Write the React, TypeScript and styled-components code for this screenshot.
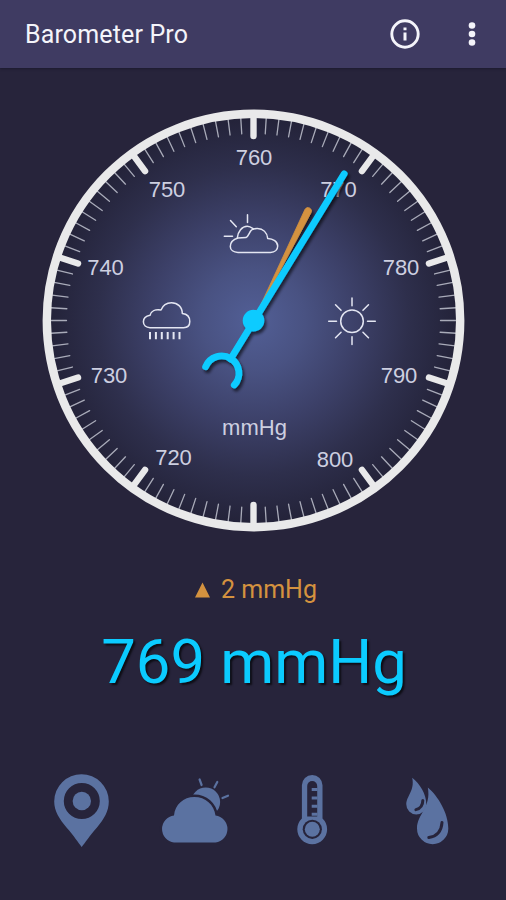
import React from "react";
import styled, { createGlobalStyle } from "styled-components";

const GlobalStyle = createGlobalStyle`
  * { box-sizing: border-box; }
  body { margin: 0; background: #27243b; }
`;

const Screen = styled.div`
  width: 506px;
  height: 900px;
  display: flex;
  flex-direction: column;
  align-items: center;
  background: #27243b;
  font-family: Roboto, "Liberation Sans", sans-serif;
  overflow: hidden;
`;

const AppBar = styled.header`
  width: 100%;
  height: 68px;
  flex: none;
  display: flex;
  align-items: center;
  justify-content: space-between;
  padding: 0 19px 0 25px;
  background: #3f3b62;
  box-shadow: 0 1px 2px rgba(20, 18, 36, 0.5);
`;

const Title = styled.h1`
  margin: 0;
  padding-top: 2px;
  font-size: 25px;
  line-height: 32px;
  font-weight: 400;
  letter-spacing: 0.15px;
  color: #f4f4fa;
`;

const Actions = styled.div`
  display: flex;
  align-items: center;
  gap: 36px;
`;

const IconButton = styled.button<{ $width: number }>`
  width: ${(p) => p.$width}px;
  height: 32px;
  padding: 0;
  border: 0;
  background: none;
  display: flex;
  align-items: center;
  justify-content: center;
`;

const Dial = styled.svg`
  display: block;
  width: 506px;
  height: 492px;
  flex: none;
`;

const DialText = styled.text`
  font-family: "Liberation Sans", Arial, sans-serif;
  font-size: 22px;
  fill: #cdcfe0;
  text-anchor: middle;
`;

const Trend = styled.div`
  display: flex;
  align-items: center;
  gap: 11px;
  height: 32px;
  margin-top: 14px;
  margin-left: 6px;
  font-size: 25px;
  line-height: 32px;
  color: #d4923f;
`;

const Reading = styled.div`
  height: 76px;
  margin-top: 18px;
  margin-left: 2px;
  font-size: 61.6px;
  line-height: 76px;
  color: #0bcbff;
  text-shadow: 2px 2px 2px rgba(0, 0, 0, 0.65);
`;

const Tabs = styled.nav`
  display: grid;
  grid-template-columns: repeat(4, 115.5px);
  margin-top: 70px;
  margin-left: 3px;
`;

const TabIcon = styled.svg`
  display: block;
  width: 115.5px;
  height: 80px;
  fill: #5b72a1;
`;

const CX = 253.5;
const CY = 320.5;

const LABELS: [string, number, number][] = [
  ["760", 254, 165],
  ["750", 167, 197],
  ["770", 338.5, 197],
  ["740", 105.5, 275],
  ["780", 401, 275],
  ["730", 109, 382.5],
  ["790", 399, 382.5],
  ["720", 173.5, 465],
  ["800", 335, 467],
];

const RAYS = [0, 45, 90, 135, 180, 225, 270, 315];

function Ticks() {
  return (
    <g strokeLinecap="round">
      {Array.from({ length: 100 }, (_, i) => {
        const major = i % 10 === 0;
        return (
          <line
            key={i}
            x1={CX}
            x2={CX}
            y1={CY - 203}
            y2={CY - (major ? 184.5 : 187)}
            stroke={major ? "#e9e9ea" : "#a9abb9"}
            strokeWidth={major ? 6.4 : 1.3}
            transform={`rotate(${i * 3.6} ${CX} ${CY})`}
          />
        );
      })}
    </g>
  );
}

function Gauge() {
  return (
    <Dial viewBox="0 68 506 492">
      <defs>
        <radialGradient id="face">
          <stop offset="0" stopColor="#525f96" />
          <stop offset="0.25" stopColor="#495282" />
          <stop offset="0.5" stopColor="#3c4068" />
          <stop offset="0.75" stopColor="#2e2f4c" />
          <stop offset="1" stopColor="#232238" />
        </radialGradient>
        <filter id="drop" x="-20%" y="-20%" width="140%" height="140%">
          <feDropShadow dx="2" dy="3" stdDeviation="1.8" floodColor="#000" floodOpacity="0.6" />
        </filter>
      </defs>
      <circle cx={CX} cy={CY} r="206.5" fill="url(#face)" />
      <Ticks />
      <circle cx={CX} cy={CY} r="206.7" fill="none" stroke="#e9e9ea" strokeWidth="8.4" />
      {LABELS.map(([label, x, y]) => (
        <DialText key={label} x={x} y={y}>
          {label}
        </DialText>
      ))}
      <DialText x="254.5" y="434.5">
        mmHg
      </DialText>
      <g fill="none" stroke="#e4e6f2" strokeWidth="1.5" strokeLinecap="round" strokeLinejoin="round">
        <path d="M238 252.4H270.5C275 252.4 277.7 249.6 277.7 246C277.7 241.5 273 238.6 267.7 238.4C267 232.5 263 228.6 257.5 228.5C255 228.4 253 229 251.5 230C249 232.5 248.5 236.5 246 237.6L238 238C233 239.5 230.3 242.5 230.3 246.5C230.3 250 233.5 252.4 238 252.4Z" />
        <path d="M237.3 238C237.8 231.5 242 226.3 247.3 226.3C250 226.3 251.7 227.7 253.5 229" />
        <path d="M247.5 214.8V222.5M230.5 220.5L236.3 226.8M224.3 236.3H232.5" />
        <path d="M150 327.7H183.5C187.5 327.7 189.8 325.3 189.8 321.5C189.8 317 187 314 182.3 313.5C182.3 307 177.5 302.7 171.5 302.7C166.5 302.7 162.7 305.5 161 310C155.5 309 151 311 150 315.3C146 316 143.4 318.5 143.4 321.8C143.4 325.3 146 327.7 150 327.7Z" />
        <path
          strokeLinecap="butt"
          strokeWidth="2"
          d="M150 332V339.3M155.9 332V339.3M161.8 332V339.3M167.7 332V339.3M173.6 332V339.3M179.5 332V339.3"
        />
        <circle cx="352" cy="321.3" r="11.3" />
        {RAYS.map((a) => (
          <path key={a} d="M352 298V305.8" transform={`rotate(${a} 352 321.3)`} />
        ))}
      </g>
      <path
        d="M253.5 320.5L304.9 209.5A3.4 3.4 0 0 1 311.1 212.5Z"
        fill="#d4923f"
        stroke="#d4923f"
        strokeWidth="0.8"
        filter="url(#drop)"
      />
      <g filter="url(#drop)" fill="none" stroke="#0bcbff" strokeWidth="6.8" strokeLinecap="round">
        <path d="M344.2 173.8L230.6 359" />
        <path d="M205.6 366.7A17.3 17.3 0 1 1 234.3 385" />
        <circle cx="253.5" cy="320.6" r="10.8" fill="#0bcbff" stroke="none" />
      </g>
    </Dial>
  );
}

function PlaceIcon() {
  return (
    <TabIcon viewBox="23.5 770 115.5 80">
      <path
        fillRule="evenodd"
        d="M81.2 847C78 843 73.5 836 66 827.5C59 819 53.7 811 53.7 801.5A27.3 27.3 0 0 1 108.3 801.5C108.3 811 103.5 819 96.5 827.5C89 836 84.5 843 81.2 847ZM81.3 783A18 18 0 1 0 81.3 819A18 18 0 1 0 81.3 783Z"
      />
      <circle cx="81.3" cy="801" r="9.2" />
    </TabIcon>
  );
}

function WeatherIcon() {
  const cloud =
    "M174 842.6A13.6 13.6 0 0 1 174 815.6C175 804.5 183.5 797 194.3 797C205.5 797 214 804.5 215.5 815.6A13.6 13.6 0 0 1 215.5 842.6Z";
  return (
    <TabIcon viewBox="139 770 115.5 80">
      <circle cx="205.7" cy="802" r="14.4" />
      <path d={cloud} stroke="#27243b" strokeWidth="5" />
      <path d={cloud} />
      <path
        d="M199.6 779.5L201.6 785M217.3 782L214.5 787.3M222.5 798L228 795.7"
        stroke="#5b72a1"
        strokeWidth="2.2"
        strokeLinecap="round"
      />
    </TabIcon>
  );
}

function TemperatureIcon() {
  return (
    <TabIcon viewBox="254.5 770 115.5 80">
      <path d="M301.4 785.2A10.3 10.3 0 0 1 322 785.2V818.5A14.9 14.9 0 1 1 301.4 818.5Z" />
      <path d="M306.7 786A5 5 0 0 1 316.7 786V816.5H306.7Z" fill="#27243b" />
      <circle cx="311.8" cy="829.3" r="9.6" fill="#27243b" />
      <circle cx="311.8" cy="829.3" r="7.5" />
      <path d="M311.2 789.5H317M311.2 798H317M311.2 806.2H317M311.2 814.3H317" stroke="#5b72a1" strokeWidth="3" />
    </TabIcon>
  );
}

function HumidityIcon() {
  return (
    <TabIcon viewBox="370 770 115.5 80">
      <path d="M412.2 777.8C420 784 426.3 794 426.3 804.5A10 10 0 0 1 406.3 804.5C406.3 796 415 791 412.2 777.8Z" />
      <path
        d="M427.8 787.5C438 796 448.3 813 448.3 828.5A15.6 15.6 0 0 1 417 828.5C417 814 431.5 807.5 427.8 787.5Z"
      />
      <path
        d="M422.8 800.5C422.8 805.5 420.5 808.5 415.9 809.6M442 822.5C441.5 830.5 437.5 836.2 428.8 837.6"
        fill="none"
        stroke="#27243b"
        strokeWidth="3"
        strokeLinecap="round"
      />
    </TabIcon>
  );
}

export default function App() {
  return (
    <>
      <GlobalStyle />
      <Screen>
        <AppBar>
          <Title>Barometer Pro</Title>
          <Actions>
            <IconButton $width={32} aria-label="Info">
              <svg width="32" height="32" viewBox="0 0 32 32">
                <circle cx="16" cy="16" r="13.2" fill="none" stroke="#f4f4fa" strokeWidth="2.9" />
                <path d="M16 14.6V22.6M16 9.4V12.2" stroke="#f4f4fa" strokeWidth="3" />
              </svg>
            </IconButton>
            <IconButton $width={30} aria-label="More options">
              <svg width="30" height="32" viewBox="0 0 30 32" fill="#f4f4fa">
                <circle cx="15" cy="7.5" r="3.3" />
                <circle cx="15" cy="16" r="3.3" />
                <circle cx="15" cy="24.5" r="3.3" />
              </svg>
            </IconButton>
          </Actions>
        </AppBar>
        <Gauge />
        <Trend>
          <svg width="15" height="16" viewBox="0 0 15 16">
            <path d="M7.5 0.5L15 15.5H0Z" fill="#d4923f" />
          </svg>
          2 mmHg
        </Trend>
        <Reading>769 mmHg</Reading>
        <Tabs>
          <PlaceIcon />
          <WeatherIcon />
          <TemperatureIcon />
          <HumidityIcon />
        </Tabs>
      </Screen>
    </>
  );
}
